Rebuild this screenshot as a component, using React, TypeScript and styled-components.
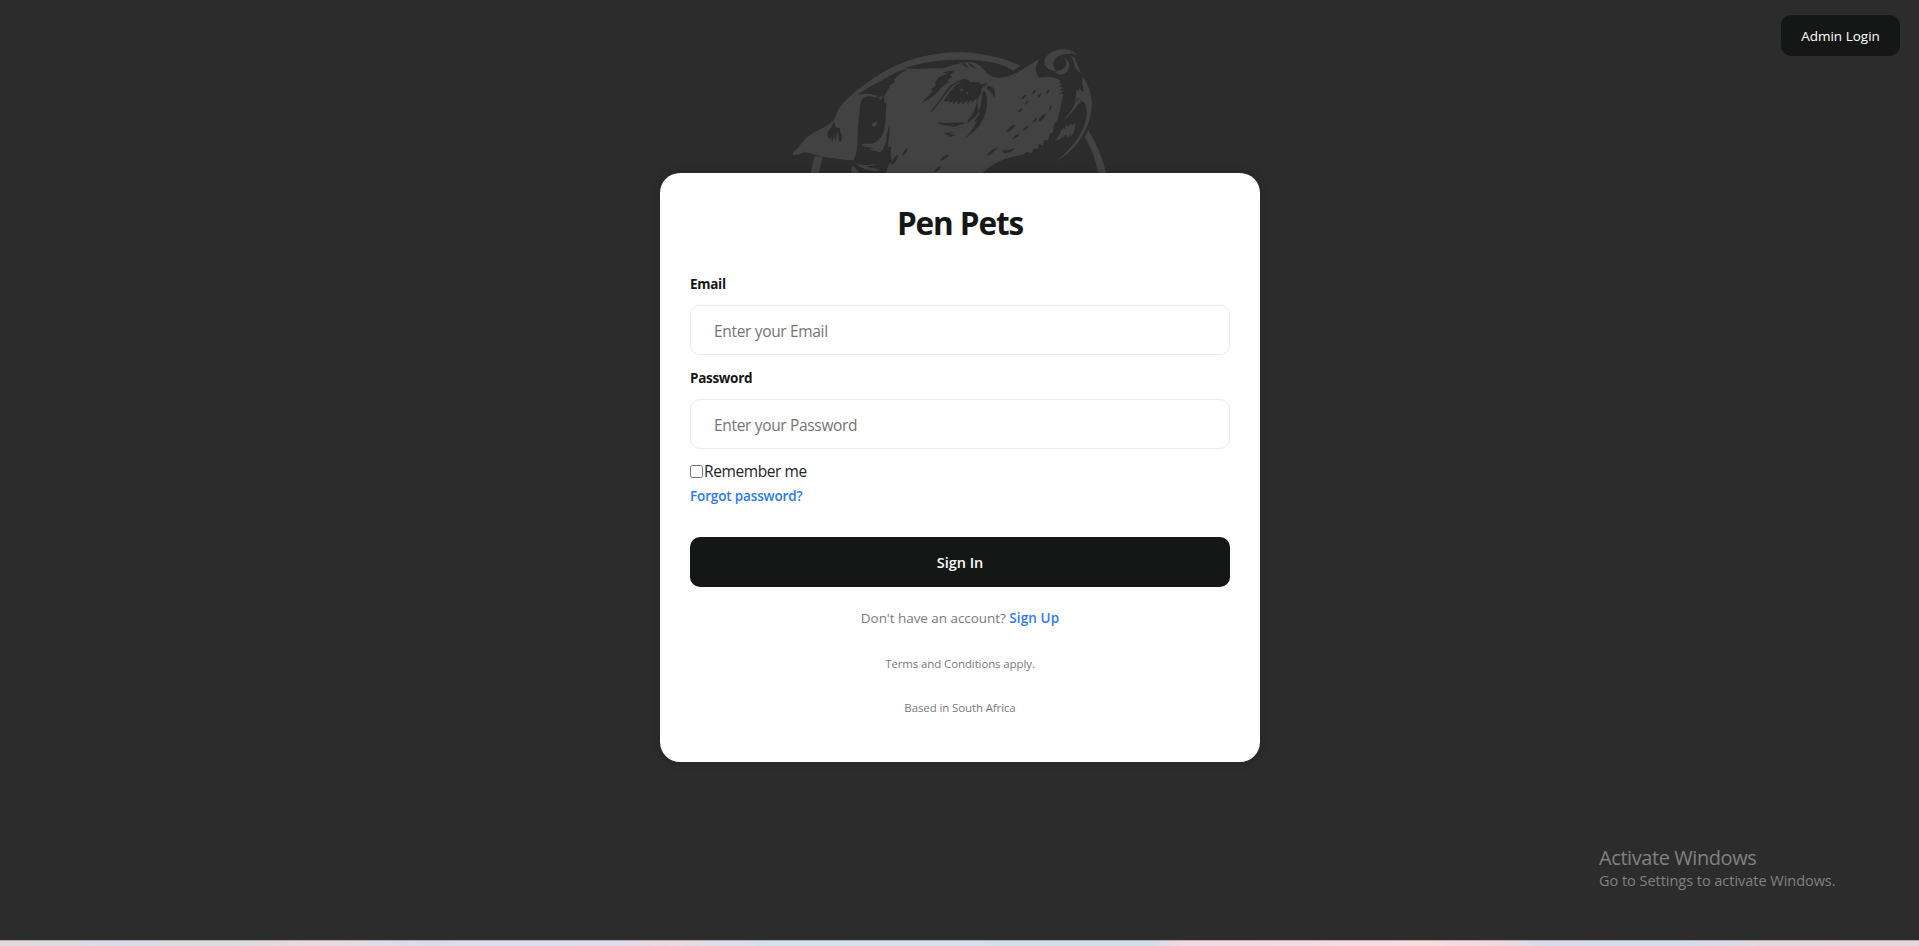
import React from "react";
import styled, { createGlobalStyle } from "styled-components";

const GlobalStyle = createGlobalStyle`
  * { box-sizing: border-box; }
  body {
    margin: 0;
    background: #2c2c2c;
    font-family: "Segoe UI", "Open Sans", "Noto Sans", sans-serif;
  }
  input, button { font-family: inherit; }
`;

const Page = styled.div`
  position: relative;
  display: flex;
  flex-direction: column;
  align-items: center;
  height: 100vh;
  min-height: 780px;
  overflow: hidden;
  background: #2c2c2c;
`;

const Header = styled.header`
  display: flex;
  justify-content: flex-end;
  width: 100%;
  padding: 15px 19px 0;
`;

const AdminButton = styled.button`
  width: 119px;
  height: 41px;
  padding: 1px 0 0;
  border: none;
  border-radius: 10px;
  background: #151717;
  color: #fff;
  font-size: 13.5px;
  letter-spacing: 0;
  white-space: nowrap;
`;

const DogArt = styled.svg`
  display: block;
  flex: none;
  width: 359px;
  height: 133px;
  margin-top: -16px;
`;

const Card = styled.form`
  display: flex;
  flex-direction: column;
  flex: none;
  width: 600px;
  height: 589px;
  margin-left: 1px;
  padding: 30px;
  border-radius: 20px;
  background: #fff;
  box-shadow: 0 0 10px rgba(0, 0, 0, 0.2);
`;

const Title = styled.h1`
  margin: 0;
  height: 43px;
  line-height: 39px;
  text-align: center;
  color: #151717;
  font-size: 31.5px;
  font-weight: 700;
  letter-spacing: -1.1px;
`;

const Label = styled.label<{ $first?: boolean }>`
  height: 20px;
  margin-top: ${(p) => (p.$first ? "28px" : "13px")};
  line-height: 20px;
  color: #151717;
  font-size: 13.5px;
  font-weight: 700;
  letter-spacing: -0.3px;
`;

const Field = styled.input`
  width: 100%;
  height: 50px;
  margin-top: 11px;
  padding: 2px 23px 0;
  border: 1px solid #ececec;
  border-radius: 10px;
  background: #fff;
  font-size: 15.5px;
  letter-spacing: -0.33px;
  outline: none;
  &::placeholder { color: #757575; opacity: 1; }
`;

const Remember = styled.label`
  display: flex;
  align-items: center;
  height: 22px;
  margin-top: 11px;
  color: #212529;
  font-size: 15.5px;
  letter-spacing: -0.4px;
`;

const Checkbox = styled.input`
  width: 13px;
  height: 13px;
  margin: 0 1px 0 0;
`;

const Link = styled.a<{ $block?: boolean }>`
  ${(p) => p.$block && "display: block; height: 20px; line-height: 20px; margin-top: 4px; align-self: flex-start;"}
  color: #2d79f3;
  font-size: 13.5px;
  font-weight: 600;
  letter-spacing: ${(p) => (p.$block ? "-0.15px" : "0.1px")};
  cursor: pointer;
`;

const SignIn = styled.button`
  flex: none;
  height: 50px;
  margin-top: 31px;
  padding: 0;
  border: none;
  border-radius: 10px;
  background: #151717;
  color: #fff;
  font-size: 14.5px;
  font-weight: 600;
  letter-spacing: 0;
`;

const Note = styled.p<{ $small?: boolean; $gap: number }>`
  margin: ${(p) => p.$gap}px 0 0;
  height: 20px;
  line-height: 20px;
  text-align: center;
  color: #7a7a7a;
  font-size: ${(p) => (p.$small ? "11.5px" : "13.5px")};
  letter-spacing: ${(p) => (p.$small ? "-0.12px" : "-0.05px")};
`;

const Watermark = styled.div`
  position: absolute;
  left: 1599px;
  bottom: 55px;
  color: #818181;
  white-space: nowrap;
`;

const WatermarkTitle = styled.div`
  height: 26px;
  line-height: 25px;
  font-size: 20px;
  letter-spacing: -0.42px;
`;

const WatermarkText = styled.div`
  height: 20px;
  line-height: 20px;
  font-size: 14.5px;
  letter-spacing: -0.03px;
`;

const BottomStrip = styled.div`
  flex: none;
  width: 100%;
  height: 6px;
  margin-top: auto;
  border-top: 1px solid #b4b4b8;
  background: linear-gradient(
    90deg,
    #e4dada 0%, #dcdce6 6%, #dcdcde 12%, #ead8de 16%, #dcdce8 22%, #dadeee 28%,
    #ead8e2 35%, #d4e0ea 40%, #d8e0ec 48%, #d2dee8 56%, #d4dee8 60%, #f2d8e2 61.5%,
    #f4dae2 68%, #fadcdc 74%, #f2d8da 78%, #d8dcea 80.5%, #d6dcea 88%, #e4d8e0 92%, #e4d8dc 100%
  );
`;

const LIGHT = "#424242";
const DARK = "#2c2c2c";

function Dog() {
  return (
    <DogArt viewBox="0 0 1077 399" aria-hidden="true">
      <g fill={LIGHT}>
        {/* ring */}
        <path d="M170 221 A452 452 0 0 1 722 77 L700 92 A430 430 0 0 0 190 238Z" />
        <path d="M105 348 L128 351 Q121 374 117 399 H92 Q96 373 105 348Z" />
        <path d="M924 270 Q960 326 979 399 H955 Q943 338 914 291Z" />
        {/* head and ear */}
        <path d="M38 344 C38 334 49 330 57 320 C74 296 92 281 116 270 C139 260 152 250 161 240 C170 228 169 218 176 207 C206 165 275 105 375 88 L490 84 C515 80 535 66 570 67 C620 69 605 114 660 113 C708 111 735 78 780 57 L766 85 L776 112 C822 104 847 120 858 140 C855 180 838 210 833 238 L822 255 L819 277 L808 283 L804 301 L792 300 L789 317 L776 312 L775 326 L760 327 L755 339 L740 336 L727 345 C693 351 646 360 608 399 H213 L220 360 C202 363 175 353 150 353 C114 351 92 337 75 337 C61 340 51 348 38 344Z" />
        {/* lower lip */}
        <path d="M908 110 C922 128 935 161 935 190 C936 248 903 323 830 363 C872 330 912 278 920 229 C923 203 920 188 905 182 C888 194 878 222 852 238 C872 218 884 200 886 184 L890 148 L903 160Z" />
        <path d="M824 303 C838 289 838 278 850 264 L854 267 L860 253 L864 261 L874 248 L875 259 L884 248 C887 264 883 276 873 291 L871 281 L864 293 L859 284 C848 291 838 300 824 303Z" />
      </g>
      <g fill={DARK}>
        {/* brow and crown */}
        <path d="M232 167 C260 142 299 126 338 103 C354 94 370 88 381 89 C359 101 350 110 342 119 L345 125 L330 136 C326 151 314 163 306 178 L307 166 L299 172 C282 160 254 157 232 167Z" />
        <path d="M372 86 C415 69 477 58 535 59 C620 58 665 70 700 92 C679 108 651 106 635 90 C611 65 574 61 532 67 C510 72 494 82 474 84 C436 79 404 84 372 86Z" />
        {/* ear hollow */}
        <path d="M240 197 C242 177 253 166 273 169 L284 173 L293 169 L301 180 L313 172 L314 190 L320 188 C316 213 319 231 316 250 C311 288 298 305 276 311 C263 311 250 310 244 314 C258 325 275 320 281 325 L265 328 L300 337 C314 325 320 304 320 285 L329 252 C330 277 324 301 325 322 L334 318 C330 337 332 353 337 363 L326 374 L317 399 H232 L215 376 L222 357 C236 332 232 298 234 260Z" />
        <path d="M161 243 L155 261 C142 273 138 285 147 296 L153 292 L157 305 L162 286 L166 305 L172 274 C178 284 173 293 180 307 C190 296 186 281 180 274 L180 263 L168 263Z" />
        <path d="M334 376 C336 360 344 348 355 345 C352 359 344 371 334 376ZM366 348 C367 338 373 329 383 323 C382 333 375 344 366 348Z" />
        {/* forehead and eye */}
        <path d="M525 90 L489 97 L500 102 L478 110 L464 128 L468 135 L452 149 L459 151 C450 164 440 174 424 188 L446 178 C463 166 476 156 483 143 L508 124 L501 124 L517 108 L509 109Z" />
        <path d="M448 219 C475 199 492 164 517 139 C534 122 551 125 570 119 C552 121 542 126 527 135 L490 185 L510 183 L506 190 L522 183 L518 193 L534 183 L532 194 L548 182 L545 194 L565 180 L560 193 L577 176 L573 189 L591 174 L588 185 L602 163 L605 145 L626 129 L605 133 L595 126 L572 127 L556 116 C532 121 514 132 504 146 C492 164 476 199 448 219Z" />
        <path d="M527 139 C546 123 573 123 596 137 L602 151 C597 171 582 180 565 181 C538 188 511 179 492 184 C504 163 512 151 527 139Z" />
        <path d="M542 71 L553 70 L570 84 L558 80ZM564 70 L574 71 L590 87 L574 80Z" />
        <path d="M622 138 C640 136 648 149 644 173 C635 160 631 151 620 147ZM609 154 C619 148 624 177 619 211 C612 242 586 280 552 296 C572 281 585 255 593 240 L582 247 L601 215 L590 222 L602 198 C606 181 605 167 609 154Z" />
        <path d="M591 184 C599 214 589 233 574 240 L562 251 L564 241 C575 228 586 210 591 184ZM474 246 C500 253 528 245 558 249 C538 255 529 260 507 262 L520 256 C501 258 487 257 478 251ZM490 279 L527 276 L508 283 L528 284 L510 291 L503 286Z" />
        {/* whisker marks */}
        <path d="M724 178 Q727 165 738 164 Q736 175 724 178ZM757 162 Q756 151 767 150 Q767 159 757 162ZM734 194 Q737 184 746 182 Q744 192 734 194ZM714 218 Q717 206 728 205 Q724 216 714 218ZM772 175 Q773 161 785 159 Q783 172 772 175ZM798 163 Q798 151 808 148 Q808 159 798 163ZM758 249 Q762 235 772 234 Q769 246 758 249ZM807 213 Q808 200 815 196 Q816 208 807 213ZM776 247 Q779 225 798 220 Q796 237 776 247ZM727 273 Q734 258 746 257 Q741 269 727 273ZM678 279 Q687 255 706 254 Q700 269 678 279ZM697 297 Q706 282 720 281 Q713 294 697 297ZM620 348 Q633 325 655 323 Q642 332 634 342ZM666 331 Q686 333 705 325 Q691 342 671 338ZM480 363 Q488 345 508 344 Q496 360 480 363ZM462 397 Q469 379 486 377 Q478 393 462 397Z" />
        {/* muzzle edge */}
        <path d="M780 56 C765 75 764 94 778 113 C801 103 823 106 841 121 L836 128 L848 133 L836 138 L850 143 L838 150 L850 154 L838 161 L850 163 L830 260 L850 240 L886 185 L890 145 L914 160 L900 105 L850 118 L790 95Z" />
      </g>
      <path d="M452 216 C476 194 490 162 513 138" fill="none" stroke={DARK} strokeWidth="4" />
      <g fill={LIGHT}>
        {/* eye glints, ear folds */}
        <circle cx="545" cy="150" r="4" />
        <ellipse cx="562" cy="160" rx="2" ry="5" />
        <path d="M289 240 C291 248 284 246 277 250 C274 258 281 263 287 259 C293 255 292 247 289 240Z" />
        <path d="M213 399 L218 376 L240 399Z" />
        <path d="M226 370 C245 377 265 376 290 371 C280 378 270 378 259 378 C270 386 290 384 302 391 C280 396 250 392 226 370Z" />
        {/* nose */}
        <path d="M793 62 C798 42 825 25 855 28 C872 29 886 36 890 46 C883 41 874 38 866 42 C843 40 821 52 820 72 C820 82 825 87 828 93 C805 91 790 78 793 62ZM851 54 C864 64 861 78 848 87 C839 92 830 91 826 96 C834 107 852 107 862 94 C873 78 869 59 851 54ZM870 49 C885 57 877 79 895 94 L904 99 C892 82 891 60 880 50Z" />
        {/* jaw */}
        <path d="M908 110 C922 128 935 161 935 190 L920 215 C920 199 916 184 905 182 C888 194 878 222 852 238 C872 218 884 200 886 184 L890 148 L896 165 L898 143 L906 156 L912 150Z" />
      </g>
      <path d="M889 184 L896 174 L905 184" fill="none" stroke={DARK} strokeWidth="3" />
    </DogArt>
  );
}

export default function App() {
  return (
    <>
      <GlobalStyle />
      <Page>
        <Header>
          <AdminButton type="button">Admin Login</AdminButton>
        </Header>
        <Dog />
        <Card onSubmit={(e) => e.preventDefault()}>
          <Title>Pen Pets</Title>
          <Label $first htmlFor="email">Email</Label>
          <Field id="email" type="email" placeholder="Enter your Email" />
          <Label htmlFor="password">Password</Label>
          <Field id="password" type="password" placeholder="Enter your Password" />
          <Remember>
            <Checkbox type="checkbox" />
            Remember me
          </Remember>
          <Link $block>Forgot password?</Link>
          <SignIn type="submit">Sign In</SignIn>
          <Note $gap={21}>
            Don't have an account? <Link>Sign Up</Link>
          </Note>
          <Note $small $gap={26}>Terms and Conditions apply.</Note>
          <Note $small $gap={24}>Based in South Africa</Note>
        </Card>
        <BottomStrip />
        <Watermark>
          <WatermarkTitle>Activate Windows</WatermarkTitle>
          <WatermarkText>Go to Settings to activate Windows.</WatermarkText>
        </Watermark>
      </Page>
    </>
  );
}
